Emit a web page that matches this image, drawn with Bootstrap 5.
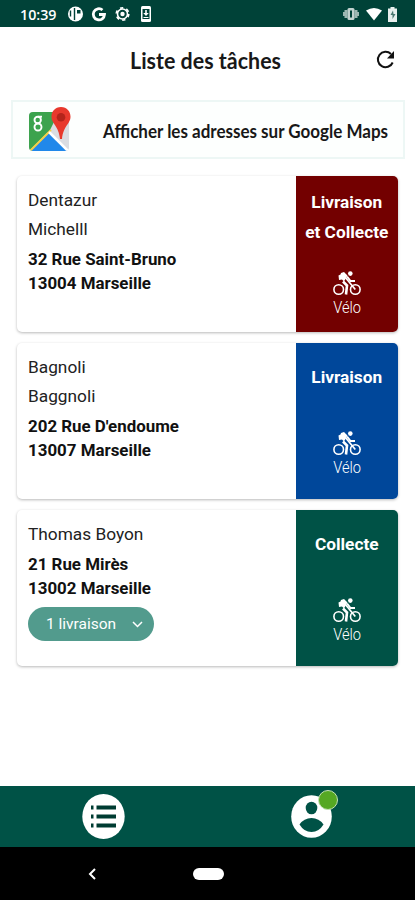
<!DOCTYPE html>
<html lang="fr">
<head>
<meta charset="utf-8">
<meta name="viewport" content="width=device-width, initial-scale=1">
<title>Liste des tâches</title>
<link rel="stylesheet" href="https://cdn.jsdelivr.net/npm/bootstrap@5.3.0/dist/css/bootstrap.min.css">
<style>
body{font-family:Roboto,"Liberation Sans",sans-serif;color:#222;height:900px;overflow:hidden}
svg{display:block;flex:none}
.status{height:27px;background:#004238;padding:2px 17px 0 20px}
.clock{font:600 15px/22px "Open Sans",sans-serif;width:48px;white-space:nowrap;padding-bottom:2px}
.clock span,.title span,.maps-label span{display:inline-block;transform-origin:0 50%;white-space:nowrap}
.clock span{transform:scaleX(.95)}
.topbar{height:73px;padding:0 20px 8px 130px}
.title{font:700 22px/30px Lato,sans-serif;color:#181818;padding-top:2px}
.title span{transform:scaleX(.975)}
.maps-btn{height:59px;margin:0 10px 0 11px;border:2px solid #edf7f5;padding-left:16px;background:#fdfffe}
.maps-label{font:700 18.5px/26px Lato,sans-serif;margin-left:32px;width:287px;padding-top:2px;color:#181818}
.maps-label span{transform:scaleX(.919)}
.tasks{padding:17px 17px 0;gap:11.5px}
.task{height:155.5px;border-radius:5px;box-shadow:0 1px 3px rgba(0,0,0,.28);overflow:hidden}
.info{padding:10px 0 0 11px;font-size:17.3px;line-height:29.2px}
.address{font-weight:700;font-size:16.9px;line-height:24px;color:#111;padding-top:2.5px}
.kind{width:102.5px;font-size:17.3px;line-height:29.5px;font-weight:700;padding:12px 0 15px}
.kind.single{padding-top:20px;padding-bottom:22px}
.both{background:#730000}.deliver{background:#00479a}.collect{background:#005246}
.mode{font-size:17px;line-height:20px;font-weight:300;margin-top:1px}
.mode span{display:inline-block;transform:scaleX(.86)}
.count{width:126px;height:34px;border-radius:17px;background:#529b8d;color:#fff;font-size:15.5px;line-height:34px;padding:1px 11px 0 18px;margin-top:7px;border:0}
.bottom{height:61px;background:#005246}
.dot{right:-6px;top:-5px;width:20px;height:20px;background:#56a823;border:1px solid #c3e1b2}
.system{height:53px;padding:1px 0 0 88px}
.home{width:31px;height:12px;margin-left:96px}
</style>
</head>
<body class="d-flex flex-column bg-white">
<svg width="0" height="0" class="position-absolute" aria-hidden="true">
<symbol id="bike" viewBox="0 0 28 25"><g fill="none" stroke="#fff"><circle cx="5.7" cy="18.5" r="4.8" stroke-width="1.6"/><circle cx="22.3" cy="18.5" r="4.8" stroke-width="1.6"/><path d="M10 10.500l4 4-1 9" stroke-width="2.600"/><path d="M14 5.500l3.500 4.500H22" stroke-width="2"/><path d="M12 6l10.300 12.500" stroke-width="1.700"/></g><circle cx="17.300" cy="2.600" r="2.300" fill="#fff"/><path d="M5.500 4.500l2-1 .5-1.500L11 1l3.500 3.500-3.500 6-2-2-3 .5z" fill="#fff"/></symbol>
</svg>
<header class="status d-flex align-items-center text-white">
<div class="clock"><span>10:39</span></div>
<svg width="87" height="18" viewBox="0 0 87 18"><circle cx="7.500" cy="8" r="7.500" fill="#fff"/><path d="M2.500 4.500v6M6.500 2v12" fill="none" stroke="#004238" stroke-width="1.400"/><path d="M9 4h3.500v3.500H9z" fill="#004238"/><path d="M34.500 4A5.600 5.600 0 1 0 36.500 8.500H31" fill="none" stroke="#fff" stroke-width="2.800"/><g fill="none" stroke="#fff"><circle cx="54.500" cy="8" r="5" stroke-width="1.600"/><circle cx="54.500" cy="8" r="6.200" stroke-width="1.800" stroke-dasharray="3.250 3.243"/></g><circle cx="54.500" cy="8" r="2.200" fill="#fff"/><rect x="73" y="0" width="10" height="16" rx="1.500" fill="#fff"/><path d="M74.500 3h7v10h-7z" fill="#004238"/><path d="M77.200 4h1.600v3h2L78 10l-2.800-3h2zM75.500 11h5v1h-5z" fill="#fff"/></svg>
<svg class="ms-auto" width="55" height="18" viewBox="0 0 55 18"><path d="M0 6h1.500V4h3v8h-3v-2H0zM16 6h-1.500V4h-3v8h3v-2H16z" fill="#9db7b2"/><rect x="4.500" y="2" width="7" height="12" rx="1.500" fill="#c2d2cf"/><path d="M7 4.500h2v7H7z" fill="#004238"/><path d="M23 4.500q8-5 16 0L31 14.500z" fill="#fff"/><path d="M45 2.500h2.500V1h4v1.500H54V16h-9z" fill="#e8efed"/><path d="M50 4.500L47.500 9h2v4l3-5h-2z" fill="#4b7770"/></svg>
</header>
<div class="topbar d-flex align-items-center justify-content-between">
<h1 class="title m-0"><span>Liste des tâches</span></h1>
<svg width="19" height="20" viewBox="0 0 19 20"><path d="M15 4A7.700 7.700 0 1 0 16.700 12.500" fill="none" stroke="#111" stroke-width="2"/><path d="M18 1v7.500h-7z" fill="#111"/></svg>
</div>
<div class="maps-btn d-flex align-items-center">
<svg width="42" height="45" viewBox="0 0 42 45"><defs><clipPath id="tile"><rect x="0" y="5" width="40" height="39" rx="4"/></clipPath></defs><g clip-path="url(#tile)"><path d="M0 5h40v39H0z" fill="#dbdde2"/><path d="M0 5h30L21 23 0 44z" fill="#3ca34e"/><path d="M1 44L21 25l17 19z" fill="#2188ea"/><path d="M1 44L22 23" stroke="#f4cf44" stroke-width="2"/><path d="M20 25L39 44" stroke="#fff" stroke-width="2.500"/></g><g fill="none" stroke="#fff" stroke-width="1.900"><circle cx="8.700" cy="13" r="3.200"/><circle cx="9" cy="20" r="3.500"/><path d="M9 9.700h4"/></g><path d="M32 0C26 0 22.500 4.500 22.500 9.800c0 7 7.200 9 8.500 22.200h2C34.300 19 41.500 16.800 41.500 9.800 41.500 4.500 38 0 32 0z" fill="#e8392d"/><circle cx="32" cy="10.300" r="4.300" fill="#b4241b"/></svg>
<div class="maps-label"><span>Afficher les adresses sur Google Maps</span></div>
</div>
<main class="tasks d-flex flex-column flex-grow-1">
<article class="task d-flex flex-shrink-0"><div class="info flex-grow-1"><div>Dentazur</div><div>Michelll</div><div class="address">32 Rue Saint-Bruno<br>13004 Marseille</div></div>
<div class="kind both d-flex flex-column align-items-center text-center text-white"><div>Livraison<br>et Collecte</div><svg class="mt-auto" width="28" height="25"><use href="#bike"/></svg><div class="mode"><span>Vélo</span></div></div></article>
<article class="task d-flex flex-shrink-0"><div class="info flex-grow-1"><div>Bagnoli</div><div>Baggnoli</div><div class="address">202 Rue D'endoume<br>13007 Marseille</div></div>
<div class="kind single deliver d-flex flex-column align-items-center text-center text-white"><div>Livraison</div><svg class="mt-auto" width="28" height="25"><use href="#bike"/></svg><div class="mode"><span>Vélo</span></div></div></article>
<article class="task d-flex flex-shrink-0"><div class="info flex-grow-1"><div>Thomas Boyon</div><div class="address">21 Rue Mirès<br>13002 Marseille</div><button class="count d-flex align-items-center justify-content-between"><span>1 livraison</span><svg width="11" height="7" viewBox="0 0 11 7"><path d="M1 1l4.500 4.500L10 1" fill="none" stroke="#fff" stroke-width="1.500"/></svg></button></div>
<div class="kind single collect d-flex flex-column align-items-center text-center text-white"><div>Collecte</div><svg class="mt-auto" width="28" height="25"><use href="#bike"/></svg><div class="mode"><span>Vélo</span></div></div></article>
</main>
<nav class="bottom d-flex flex-shrink-0 align-items-center">
<div class="w-50 d-flex justify-content-center"><svg width="43" height="46" viewBox="0 0 43 46"><ellipse cx="21.500" cy="22.500" rx="21.200" ry="22.500" fill="#fff"/><path d="M9 11.500h2.500v4H9zm5.500 0h19.500v4H14.500zM9 20.500h2.500v4H9zm5.500 0h19.500v4H14.500zM9 29.500h2.500v4H9zm5.500 0h19.500v4H14.500z" fill="#003c32"/></svg></div>
<div class="w-50 d-flex justify-content-center"><div class="position-relative"><svg width="41" height="43" viewBox="0 0 41 43"><ellipse cx="20.500" cy="21.500" rx="20.300" ry="21.300" fill="#fff"/><ellipse cx="20.500" cy="13" rx="5.800" ry="6.300" fill="#005246"/><path d="M8.500 29.500Q13 23 20.500 23t12 6.500Q28 37 20.500 37T8.500 29.500z" fill="#005246"/></svg><span class="dot position-absolute rounded-circle"></span></div></div>
</nav>
<footer class="system d-flex flex-shrink-0 align-items-center bg-black"><svg width="9" height="12" viewBox="0 0 9 12"><path d="M7 1L2 6l5 5" fill="none" stroke="#fff" stroke-width="2"/></svg><div class="home bg-white rounded-pill"></div></footer>
<script src="https://cdn.jsdelivr.net/npm/bootstrap@5.3.0/dist/js/bootstrap.bundle.min.js"></script>
</body>
</html>
